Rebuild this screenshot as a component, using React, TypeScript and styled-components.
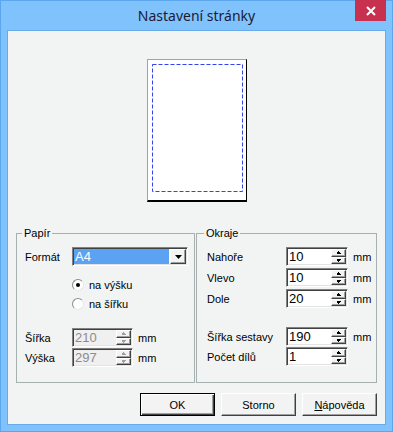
import styled, { createGlobalStyle } from 'styled-components';

const GlobalStyle = createGlobalStyle`
  html, body {
    margin: 0;
    padding: 0;
    background: #fff;
  }
  body {
    font-family: "Liberation Sans", Arial, sans-serif;
    font-size: 11px;
    color: #000;
  }
  * {
    box-sizing: border-box;
  }
`;

const FACE = '#f1f4f3';

// ─── Window frame ──────────────────────────────────────────────────────────

const Window = styled.div`
  width: 393px;
  height: 432px;
  background: #80c2fb;
  border: 1px solid #5ca6ee;
  padding: 0 6px 6px;
  display: flex;
  flex-direction: column;
`;

const TitleBar = styled.div`
  position: relative;
  height: 29px;
  display: flex;
  align-items: center;
  justify-content: center;
  font-family: "Noto Sans", "Open Sans", sans-serif;
  font-size: 14px;
  color: #1b1b38;
`;

const CloseBtn = styled.div`
  position: absolute;
  top: -1px;
  right: 0;
  width: 31px;
  height: 21px;
  background: #c7314f;
  display: flex;
  align-items: center;
  justify-content: center;
`;

const Client = styled.div`
  flex: 1;
  background: ${FACE};
  border: 1px solid #69aaeb;
  padding: 28px 8px 0;
  display: flex;
  flex-direction: column;
`;

// ─── Preview ───────────────────────────────────────────────────────────────

const Page = styled.div`
  align-self: center;
  width: 100px;
  height: 143px;
  background: #fff;
  border-left: 1px solid #9aa5a5;
  border-top: 1px solid #9aa5a5;
  border-right: 1px solid #000;
  border-bottom: 2px solid #000;
  display: flex;
`;

// ─── Group boxes ───────────────────────────────────────────────────────────

const Groups = styled.div`
  margin-top: 31px;
  display: flex;
  gap: 1px;
  height: 150px;
`;

const Group = styled.div<{ $w: number; $pad: number }>`
  position: relative;
  width: ${({ $w }) => $w}px;
  border: 1px solid #a6b0ae;
  padding: 13px 0 0 ${({ $pad }) => $pad}px;
  display: flex;
  flex-direction: column;
`;

const GroupLabel = styled.span<{ $left: number }>`
  position: absolute;
  top: -8px;
  left: ${({ $left }) => $left}px;
  padding: 0 2px;
  background: ${FACE};
  line-height: 14px;
`;

const Row = styled.div<{ $mt?: number }>`
  display: flex;
  align-items: center;
  height: 19px;
  margin-top: ${({ $mt }) => $mt ?? 0}px;
`;

const Label = styled.span<{ $w: number }>`
  width: ${({ $w }) => $w}px;
  flex-shrink: 0;
`;

const Unit = styled.span`
  margin-left: 5px;
`;

// ─── Inputs ────────────────────────────────────────────────────────────────

const Field = styled.div<{ $w: number; $disabled?: boolean }>`
  width: ${({ $w }) => $w}px;
  height: 19px;
  display: flex;
  padding: 1px;
  border: 1px solid;
  border-color: #828282 #fff #fff #828282;
  box-shadow: inset 1px 1px #404040, inset -1px -1px #e3e3e3;
  background: ${({ $disabled }) => ($disabled ? '#f0f0f0' : '#fff')};
`;

const Value = styled.span<{ $disabled?: boolean }>`
  flex: 1;
  padding-left: 1px;
  font-size: 13px;
  line-height: 15px;
  color: ${({ $disabled }) => ($disabled ? '#8c8c8c' : '#000')};
`;

const Selected = styled.span`
  flex: 1;
  background: #5ba3f2;
  color: #fff;
  font-size: 13px;
  line-height: 15px;
  padding-left: 1px;
`;

const Raised = styled.div`
  background: #f3f3f3;
  border: 1px solid;
  border-color: #fff #404040 #404040 #fff;
  box-shadow: inset -1px -1px #a0a0a0;
  display: flex;
  align-items: center;
  justify-content: center;
`;

const DropBtn = styled(Raised)`
  width: 16px;
  margin-left: 1px;
`;

const Spinner = styled.div`
  width: 15px;
  display: flex;
  flex-direction: column;
`;

const SpinHalf = styled(Raised)`
  flex: 1;
`;

// ─── Radios ────────────────────────────────────────────────────────────────

const RadioRow = styled.label`
  display: flex;
  align-items: center;
  height: 19px;
  margin-left: 47px;
  gap: 5px;
`;

const RadioDot = styled.span<{ $on?: boolean }>`
  width: 12px;
  height: 12px;
  border-radius: 50%;
  border: 1px solid;
  border-color: #8a8a8a #e8e8e8 #e8e8e8 #8a8a8a;
  background: #fff;
  display: flex;
  align-items: center;
  justify-content: center;

  &::after {
    content: '';
    width: 4px;
    height: 4px;
    border-radius: 50%;
    background: ${({ $on }) => ($on ? '#000' : 'transparent')};
  }
`;

// ─── Buttons ───────────────────────────────────────────────────────────────

const Buttons = styled.div`
  margin-top: 10px;
  display: flex;
  justify-content: flex-end;
  gap: 6px;
`;

const Button = styled.button<{ $default?: boolean }>`
  width: 75px;
  height: 23px;
  padding: 0;
  font-family: inherit;
  font-size: 11px;
  color: #000;
  background: #f3f3f3;
  border: 1px solid;
  border-color: ${({ $default }) => ($default ? '#000' : '#fff #404040 #404040 #fff')};
  box-shadow: ${({ $default }) =>
    $default
      ? 'inset 1px 1px #fff, inset -1px -1px #404040, inset -2px -2px #a0a0a0'
      : 'inset -1px -1px #a0a0a0'};
`;

// ─── Parts ─────────────────────────────────────────────────────────────────

function Arrow({ up, color }: { up?: boolean; color: string }) {
  return (
    <svg width="5" height="3" viewBox="0 0 5 3" shapeRendering="crispEdges">
      {up ? (
        <path d="M2 0h1v1h1v1h1v1H0V2h1V1h1z" fill={color} transform="translate(0.5 0) scale(0.8 1)" />
      ) : (
        <path d="M0 0h5v1H4v1H3v1H2V2H1V1H0z" fill={color} transform="translate(0.5 0) scale(0.8 1)" />
      )}
    </svg>
  );
}

function SpinBox({ value, w, disabled }: { value: string; w: number; disabled?: boolean }) {
  const c = disabled ? '#a0a0a0' : '#000';
  return (
    <Field $w={w} $disabled={disabled}>
      <Value $disabled={disabled}>{value}</Value>
      <Spinner>
        <SpinHalf>
          <Arrow up color={c} />
        </SpinHalf>
        <SpinHalf>
          <Arrow color={c} />
        </SpinHalf>
      </Spinner>
    </Field>
  );
}

const margins = [
  { label: 'Nahoře', value: '10', mt: 0, unit: true },
  { label: 'Vlevo', value: '10', mt: 2, unit: true },
  { label: 'Dole', value: '20', mt: 2, unit: true },
  { label: 'Šířka sestavy', value: '190', mt: 19, unit: true },
  { label: 'Počet dílů', value: '1', mt: 1, unit: false },
];

export default function App() {
  return (
    <>
      <GlobalStyle />
      <Window>
        <TitleBar>
          Nastavení stránky
          <CloseBtn>
            <svg width="10" height="10" viewBox="0 0 10 10">
              <path d="M1 1L9 9M9 1L1 9" stroke="#fff" strokeWidth="2" />
            </svg>
          </CloseBtn>
        </TitleBar>

        <Client>
          <Page>
            <svg width="98" height="140" viewBox="0 0 98 140">
              <rect x="4.5" y="4.5" width="90" height="127" fill="none" stroke="#3344ee" strokeDasharray="4 2" />
            </svg>
          </Page>

          <Groups>
            <Group $w={179} $pad={8}>
              <GroupLabel $left={5}>Papír</GroupLabel>
              <Row>
                <Label $w={47}>Formát</Label>
                <Field $w={116}>
                  <Selected>A4</Selected>
                  <DropBtn>
                    <svg width="7" height="4" viewBox="0 0 7 4">
                      <path d="M0 0h7L3.5 4z" fill="#000" />
                    </svg>
                  </DropBtn>
                </Field>
              </Row>
              <div style={{ marginTop: 9 }}>
                <RadioRow>
                  <RadioDot $on />
                  na výšku
                </RadioRow>
                <RadioRow>
                  <RadioDot />
                  na šířku
                </RadioRow>
              </div>
              <Row $mt={15}>
                <Label $w={47}>Šířka</Label>
                <SpinBox value="210" w={61} disabled />
                <Unit>mm</Unit>
              </Row>
              <Row $mt={1}>
                <Label $w={47}>Výška</Label>
                <SpinBox value="297" w={61} disabled />
                <Unit>mm</Unit>
              </Row>
            </Group>

            <Group $w={181} $pad={10}>
              <GroupLabel $left={7}>Okraje</GroupLabel>
              {margins.map((m) => (
                <Row key={m.label} $mt={m.mt}>
                  <Label $w={79}>{m.label}</Label>
                  <SpinBox value={m.value} w={62} />
                  {m.unit && <Unit>mm</Unit>}
                </Row>
              ))}
            </Group>
          </Groups>

          <Buttons>
            <Button $default>OK</Button>
            <Button>Storno</Button>
            <Button>
              <u>N</u>ápověda
            </Button>
          </Buttons>
        </Client>
      </Window>
    </>
  );
}
